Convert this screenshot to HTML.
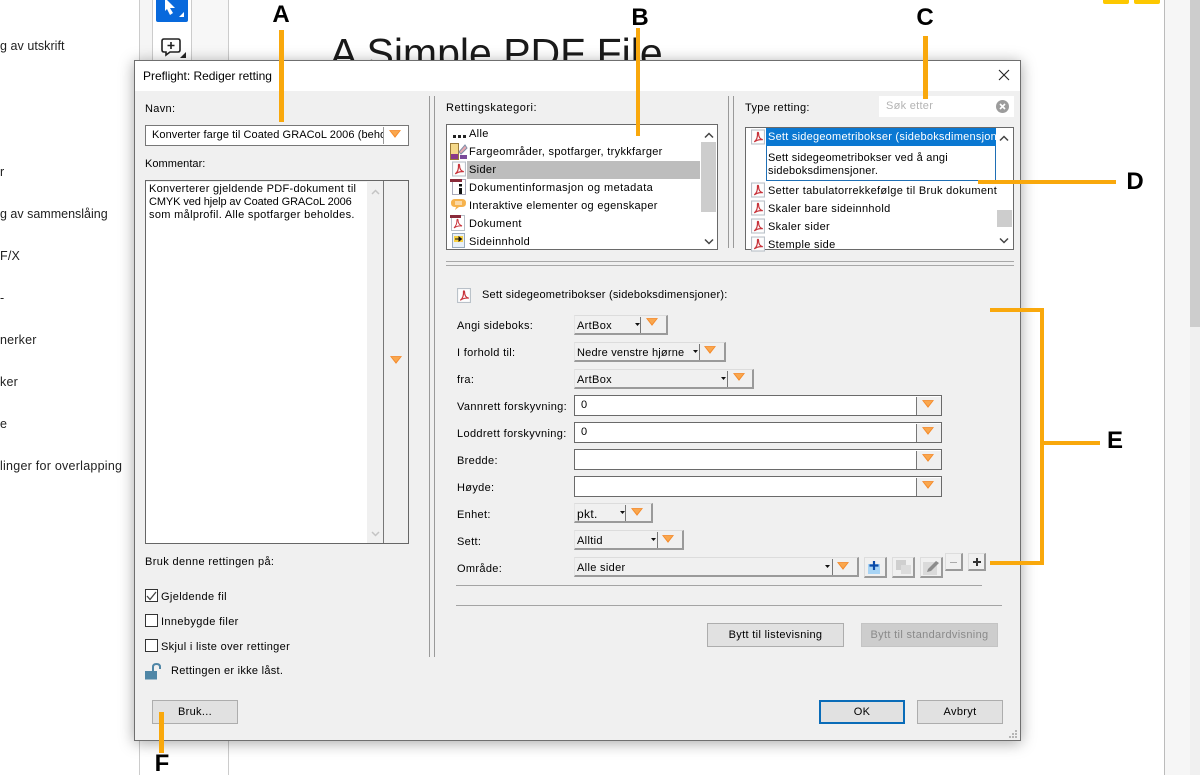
<!DOCTYPE html>
<html lang="no"><head><meta charset="utf-8"><title>Preflight: Rediger retting</title>
<style>
html,body{margin:0;padding:0}
body{position:relative;width:1200px;height:775px;overflow:hidden;background:#fff;font-family:"Liberation Sans",sans-serif;color:#111}
.a,.t,.o,.l,.sel,.inp,.btn,.tri,.pdf{position:absolute}
.t{white-space:pre;font-size:11px;line-height:14px;letter-spacing:.33px;color:#000;margin-top:1px}
.side{font-size:12.500px;letter-spacing:.2px;line-height:15px;color:#222}
.o{background:#f9a80c}
.l{font-weight:bold;font-size:24px;line-height:28px;color:#000;transform:translateX(-50%)}
.sel{height:20px;background:#f0f0f0;border-top:1px solid #dcdcdc;border-left:1px solid #e4e4e4;border-right:2px solid #9a9a9a;border-bottom:2px solid #9a9a9a;box-sizing:border-box}
.inp{height:21px;width:368px;left:574px;background:#fff;border:1px solid #6a6a6a;box-sizing:border-box}
.btn{box-sizing:border-box;background:#e1e1e1;border:1px solid #adadad;text-align:center;font-size:11px;letter-spacing:.33px;line-height:23px;color:#000}
svg{position:absolute;overflow:visible}
.s{position:absolute;background:#fff;overflow:hidden}
.chk{position:absolute;left:145px;width:11px;height:11px;border:1px solid #333;background:#fff}
.ico{box-sizing:border-box;position:absolute;width:23px;height:21px;background:#f0f0f0;border-right:2px solid #9a9a9a;border-bottom:2px solid #9a9a9a;border-top:1px solid #ddd;border-left:1px solid #ddd}
.g{position:absolute;left:341px;top:1px;width:24px;height:18px;background:#f0f0f0;border-left:1px solid #777}
</style></head><body>
<svg width="0" height="0" style="position:absolute"><defs>
<symbol id="p" viewBox="0 0 13 14"><rect x=".5" y=".5" width="12" height="13" fill="#fdfdfd" stroke="#b9c0c8"/><path d="M3 11.500C5 10 6.300 7 6 3.200C6 2.500 7 2.500 7 3.500C7 7 8.200 9 11 9.500C8 9.200 5 10 3 11.500Z" fill="none" stroke="#c8323a" stroke-width="1.100"/></symbol>
<symbol id="tr" viewBox="0 0 14 9"><path d="M0 0H14L7 9Z" fill="#f58a2a"/><path d="M2 1H12L7 7Z" fill="#f9a74e"/></symbol>
</defs></svg>

<!-- background application -->
<div class="a" style="left:139px;top:0;width:90px;height:775px;background:#fff;border-left:1px solid #ccc;border-right:1px solid #ccc;box-sizing:border-box"></div>
<div class="a" style="left:140px;top:0;width:12px;height:61px;background:#f5f5f5"></div>
<div class="a" style="left:152px;top:0;width:1px;height:61px;background:#ccc"></div>
<div class="a" style="left:191px;top:0;width:37px;height:61px;background:#f7f7f7;border-left:1px solid #ccc;box-sizing:border-box"></div>
<div class="a" style="left:156px;top:0;width:32px;height:22px;background:#0869dc;border-radius:0 0 2px 2px"></div>
<svg style="left:156px;top:0" width="32" height="22"><path d="M9 -2L19 8H14L17 13L14 15L11 9L9 11Z" fill="#fff"/><path d="M23 17L28 12V17Z" fill="#fff"/></svg>
<svg style="left:160px;top:36px" width="28" height="24"><path d="M4 3H18Q20 3 20 5V14Q20 16 18 16H10L6 19V16H4Q2 16 2 14V5Q2 3 4 3Z" fill="#fff" stroke="#222" stroke-width="1.600"/><path d="M11 6V13M7.500 9.500H14.500" stroke="#222" stroke-width="1.600"/><path d="M20 22L26 16V22Z" fill="#222"/></svg>
<div class="a" style="left:330px;top:31px;font-size:41px;line-height:44px;white-space:pre;color:#1a1a1a">A Simple PDF File</div>
<div class="a" style="left:1103px;top:0;width:26px;height:4px;background:#fdc800;border-radius:0 0 2px 2px"></div>
<div class="a" style="left:1134px;top:0;width:26px;height:4px;background:#fdc800;border-radius:0 0 2px 2px"></div>
<div class="a" style="left:1164px;top:0;width:26px;height:775px;background:#f6f6f6;border-left:1px solid #bbb;box-sizing:border-box"></div>
<div class="a" style="left:1190px;top:0;width:10px;height:327px;background:#cdcdcd"></div>
<div class="a" style="left:1190px;top:327px;width:10px;height:448px;background:#f0f0f0"></div>
<div class="t side" style="left:0;top:38px;letter-spacing:.05px">g av utskrift</div>
<div class="t side" style="left:0;top:164px">r</div>
<div class="t side" style="left:0;top:206px;letter-spacing:0">g av sammenslåing</div>
<div class="t side" style="left:0;top:248px">F/X</div>
<div class="t side" style="left:0;top:290px">-</div>
<div class="t side" style="left:0;top:332px">nerker</div>
<div class="t side" style="left:0;top:374px">ker</div>
<div class="t side" style="left:0;top:416px">e</div>
<div class="t side" style="left:0;top:458px;letter-spacing:.25px">linger for overlapping</div>

<!-- dialog -->
<div class="a" style="left:134px;top:60px;width:887px;height:681px;background:#f0f0f0;border:1px solid #6f6f6f;box-sizing:border-box;box-shadow:0 2px 14px rgba(0,0,0,.35)"></div>
<div class="a" style="left:135px;top:61px;width:885px;height:30px;background:#fff"></div>
<div class="t" style="left:143px;top:68px;font-size:12px;letter-spacing:-.02px">Preflight: Rediger retting</div>
<svg style="left:998px;top:69px" width="12" height="12"><path d="M1 1L11 11M11 1L1 11" stroke="#222" stroke-width="1.100"/></svg>

<!-- left column -->
<div class="t" style="left:145px;top:101px">Navn:</div>
<div class="a" style="left:145px;top:125px;width:264px;height:21px;background:#fff;border:1px solid #777;box-sizing:border-box"></div>
<div class="s" style="left:152px;top:127px;width:231px;height:17px;background:transparent"><div class="t" style="left:0;top:0;letter-spacing:.08px">Konverter farge til Coated GRACoL 2006 (behold)</div></div>
<div class="a" style="left:383px;top:127px;width:1px;height:17px;background:#999"></div>
<svg style="left:389px;top:130px" width="12" height="8"><use href="#tr"/></svg>
<div class="t" style="left:145px;top:156px;letter-spacing:.05px">Kommentar:</div>
<div class="a" style="left:145px;top:180px;width:264px;height:364px;background:#f0f0f0;border:1px solid #666;box-sizing:border-box"></div>
<div class="a" style="left:146px;top:182px;width:221px;height:361px;background:#fff"></div>
<div class="a" style="left:383px;top:181px;width:1px;height:362px;background:#777"></div>
<div class="t" style="left:149px;top:182px;line-height:13px;letter-spacing:.29px">Konverterer gjeldende PDF-dokument til</div>
<div class="t" style="left:149px;top:195px;line-height:13px;letter-spacing:-.1px">CMYK ved hjelp av Coated GRACoL 2006</div>
<div class="t" style="left:149px;top:208px;line-height:13px;letter-spacing:.33px">som målprofil. Alle spotfarger beholdes.</div>
<svg style="left:371px;top:189px" width="9" height="6"><path d="M1 5L4.500 1.500L8 5" fill="none" stroke="#c4c4c4" stroke-width="1.500"/></svg>
<svg style="left:371px;top:531px" width="9" height="6"><path d="M1 1L4.500 4.500L8 1" fill="none" stroke="#c4c4c4" stroke-width="1.500"/></svg>
<svg style="left:390px;top:356px" width="12" height="8"><use href="#tr"/></svg>
<div class="t" style="left:145px;top:554px;letter-spacing:.37px">Bruk denne rettingen på:</div>
<div class="chk" style="top:589px"></div>
<svg style="left:146px;top:591px" width="12" height="12"><path d="M1 5L4 8.500L10 1" fill="none" stroke="#444" stroke-width="1.300"/></svg>
<div class="t" style="left:161px;top:589px;letter-spacing:.37px">Gjeldende fil</div>
<div class="chk" style="top:614px"></div>
<div class="t" style="left:161px;top:614px;letter-spacing:.37px">Innebygde filer</div>
<div class="chk" style="top:639px"></div>
<div class="t" style="left:161px;top:639px">Skjul i liste over rettinger</div>
<svg style="left:145px;top:663px" width="18" height="17"><rect x="0" y="8" width="12" height="8.500" fill="#4f86a6"/><path d="M8 8V4Q8 1 11.500 1Q15 1 15 4V6" fill="none" stroke="#4f86a6" stroke-width="2"/></svg>
<div class="t" style="left:171px;top:663px;letter-spacing:.28px">Rettingen er ikke låst.</div>
<div class="btn" style="left:152px;top:700px;width:86px;height:24px">Bruk...</div>

<!-- separators -->
<div class="a" style="left:429px;top:96px;width:1px;height:561px;background:#9a9a9a"></div>
<div class="a" style="left:434px;top:96px;width:1px;height:561px;background:#9a9a9a"></div>
<div class="a" style="left:728px;top:96px;width:1px;height:152px;background:#9a9a9a"></div>
<div class="a" style="left:733px;top:96px;width:1px;height:152px;background:#9a9a9a"></div>
<div class="a" style="left:446px;top:261px;width:568px;height:1px;background:#a8a8a8"></div>
<div class="a" style="left:446px;top:265px;width:568px;height:1px;background:#a8a8a8"></div>

<!-- category list -->
<div class="t" style="left:446px;top:100px;letter-spacing:.5px">Rettingskategori:</div>
<div class="a" style="left:446px;top:124px;width:272px;height:126px;background:#fff;border:1px solid #6a6a6a;box-sizing:border-box"></div>
<div class="a" style="left:701px;top:142px;width:15px;height:70px;background:#cdcdcd"></div>
<svg style="left:704px;top:132px" width="10" height="7"><path d="M1 5.500L5 1.500L9 5.500" fill="none" stroke="#444" stroke-width="1.500"/></svg>
<svg style="left:704px;top:238px" width="10" height="7"><path d="M1 1.500L5 5.500L9 1.500" fill="none" stroke="#444" stroke-width="1.500"/></svg>
<div class="a" style="left:467px;top:161px;width:233px;height:18px;background:#bdbdbd"></div>
<svg style="left:453px;top:134px" width="13" height="4"><path d="M0 1H3V4H0ZM5 1H8V4H5ZM10 1H13V4H10Z" fill="#222"/></svg>
<div class="t" style="left:469px;top:126px">Alle</div>
<svg style="left:450px;top:143px" width="17" height="17"><rect x=".5" y=".5" width="8" height="16" fill="#f5d98a" stroke="#9a7a3a"/><rect x="1" y="11" width="7" height="5" fill="#8a3a8a"/><path d="M9 9L15 2L17 5L11 11Z" fill="#e8a8b0" stroke="#8090a8"/><rect x="10" y="12" width="7" height="4" fill="#7a4a9a"/></svg>
<div class="t" style="left:469px;top:144px;letter-spacing:.31px">Fargeområder, spotfarger, trykkfarger</div>
<svg style="left:452px;top:161px" width="14" height="16"><use href="#p"/></svg>
<div class="t" style="left:469px;top:162px">Sider</div>
<svg style="left:450px;top:179px" width="16" height="16"><rect x="2.500" y=".5" width="13" height="15" fill="#fff" stroke="#aab"/><path d="M0 0H12V3H0Z" fill="#8a2a3a"/><rect x="9" y="5" width="3" height="2.500" fill="#111"/><rect x="9" y="9" width="3" height="6" fill="#111"/></svg>
<div class="t" style="left:469px;top:180px;letter-spacing:.42px">Dokumentinformasjon og metadata</div>
<svg style="left:450px;top:198px" width="17" height="14"><path d="M5 1H12Q16 1 16 5Q16 9 12 9H9L5 12L6 9H5Q1 9 1 5Q1 1 5 1Z" fill="#f6b24c"/><path d="M5 4H12M5 6H12" stroke="#fff"/></svg>
<div class="t" style="left:469px;top:198px;letter-spacing:.29px">Interaktive elementer og egenskaper</div>
<svg style="left:450px;top:215px" width="16" height="16"><rect x="1.500" y=".5" width="13" height="15" fill="#fff" stroke="#b9c0c8"/><path d="M0 0H11V3H0Z" fill="#8a2a3a"/><path d="M4 13C6 11 7 8.500 7 5C7 4 8 4 8 5C8 8.500 9.500 10 12 11C9 10.500 6 11.500 4 13Z" fill="none" stroke="#c8323a"/></svg>
<div class="t" style="left:469px;top:216px">Dokument</div>
<svg style="left:452px;top:233px" width="14" height="16"><rect x=".5" y=".5" width="12" height="14" fill="#e8f0f8" stroke="#9ab"/><rect x="2" y="3" width="9" height="6" fill="#f8d040"/><path d="M3 6H8M7 4L9.500 6L7 8Z" stroke="#111" fill="#111"/></svg>
<div class="t" style="left:469px;top:234px">Sideinnhold</div>

<!-- type list -->
<div class="t" style="left:745px;top:100px">Type retting:</div>
<div class="a" style="left:879px;top:96px;width:135px;height:21px;background:#fff"></div>
<div class="t" style="left:886px;top:98px;color:#b4b4b4;letter-spacing:.28px">Søk etter</div>
<svg style="left:996px;top:100px" width="13" height="13"><circle cx="6.500" cy="6.500" r="6.500" fill="#9c9c9c"/><path d="M4 4L9 9M9 4L4 9" stroke="#fff" stroke-width="1.600"/></svg>
<div class="a" style="left:745px;top:127px;width:269px;height:123px;background:#fff;border:1px solid #6a6a6a;box-sizing:border-box"></div>
<div class="a" style="left:766px;top:128px;width:230px;height:53px;background:#fff;border:1px solid #1f6fb5;box-sizing:border-box"></div>
<div class="s" style="left:766px;top:128px;width:230px;height:18px;background:#0a78d2"><div class="t" style="left:2px;top:1px;color:#fff;letter-spacing:.24px">Sett sidegeometribokser (sideboksdimensjoner)</div></div>
<div class="t" style="left:768px;top:151px;line-height:13px;letter-spacing:.22px">Sett sidegeometribokser ved å angi
sideboksdimensjoner.</div>
<svg style="left:751px;top:129px" width="14" height="16"><use href="#p"/></svg>
<svg style="left:751px;top:182px" width="14" height="16"><use href="#p"/></svg>
<svg style="left:751px;top:200px" width="14" height="16"><use href="#p"/></svg>
<svg style="left:751px;top:218px" width="14" height="16"><use href="#p"/></svg>
<svg style="left:751px;top:236px" width="14" height="13" viewBox="0 0 14 13"><use href="#p" width="14" height="16"/></svg>
<div class="s" style="left:768px;top:183px;width:229px;height:16px;background:transparent"><div class="t" style="left:0;top:0">Setter tabulatorrekkefølge til Bruk dokumentstruktur</div></div>
<div class="t" style="left:768px;top:201px">Skaler bare sideinnhold</div>
<div class="t" style="left:768px;top:219px">Skaler sider</div>
<div class="s" style="left:768px;top:237px;width:200px;height:12px;background:transparent"><div class="t" style="left:0;top:0">Stemple side</div></div>
<div class="a" style="left:997px;top:210px;width:15px;height:17px;background:#cdcdcd"></div>
<svg style="left:999px;top:135px" width="10" height="7"><path d="M1 5.500L5 1.500L9 5.500" fill="none" stroke="#444" stroke-width="1.500"/></svg>
<svg style="left:999px;top:237px" width="10" height="7"><path d="M1 1.500L5 5.500L9 1.500" fill="none" stroke="#444" stroke-width="1.500"/></svg>

<!-- form -->
<svg style="left:457px;top:288px" width="14" height="15"><use href="#p"/></svg>
<div class="t" style="left:482px;top:287px;letter-spacing:.22px">Sett sidegeometribokser (sideboksdimensjoner):</div>
<div class="t" style="left:457px;top:318px">Angi sideboks:</div>
<div class="t" style="left:457px;top:345px">I forhold til:</div>
<div class="t" style="left:457px;top:372px">fra:</div>
<div class="t" style="left:457px;top:399px;letter-spacing:.36px">Vannrett forskyvning:</div>
<div class="t" style="left:457px;top:426px;letter-spacing:.36px">Loddrett forskyvning:</div>
<div class="t" style="left:457px;top:453px">Bredde:</div>
<div class="t" style="left:457px;top:480px">Høyde:</div>
<div class="t" style="left:457px;top:507px">Enhet:</div>
<div class="t" style="left:457px;top:534px">Sett:</div>
<div class="t" style="left:457px;top:561px">Område:</div>

<div class="sel" style="left:574px;top:315px;width:94px"></div>
<div class="t" style="left:577px;top:318px">ArtBox</div>
<svg style="left:635px;top:323px" width="5" height="3"><path d="M0 0H5L2.500 3Z" fill="#111"/></svg>
<div class="a" style="left:640px;top:317px;width:1px;height:16px;background:#777"></div>
<svg style="left:646px;top:318px" width="12" height="8"><use href="#tr"/></svg>

<div class="sel" style="left:574px;top:342px;width:152px"></div>
<div class="t" style="left:577px;top:345px;letter-spacing:.2px">Nedre venstre hjørne</div>
<svg style="left:693px;top:350px" width="5" height="3"><path d="M0 0H5L2.500 3Z" fill="#111"/></svg>
<div class="a" style="left:699px;top:344px;width:1px;height:16px;background:#777"></div>
<svg style="left:704px;top:346px" width="12" height="8"><use href="#tr"/></svg>

<div class="sel" style="left:574px;top:369px;width:180px"></div>
<div class="t" style="left:577px;top:372px">ArtBox</div>
<svg style="left:721px;top:377px" width="5" height="3"><path d="M0 0H5L2.500 3Z" fill="#111"/></svg>
<div class="a" style="left:727px;top:371px;width:1px;height:16px;background:#777"></div>
<svg style="left:733px;top:373px" width="12" height="8"><use href="#tr"/></svg>

<div class="inp" style="top:395px"><div class="g"></div></div>
<div class="t" style="left:581px;top:397px">0</div>
<svg style="left:922px;top:400px" width="12" height="8"><use href="#tr"/></svg>
<div class="inp" style="top:422px"><div class="g"></div></div>
<div class="t" style="left:581px;top:424px">0</div>
<svg style="left:922px;top:427px" width="12" height="8"><use href="#tr"/></svg>
<div class="inp" style="top:449px"><div class="g"></div></div>
<svg style="left:922px;top:454px" width="12" height="8"><use href="#tr"/></svg>
<div class="inp" style="top:476px"><div class="g"></div></div>
<svg style="left:922px;top:481px" width="12" height="8"><use href="#tr"/></svg>

<div class="sel" style="left:574px;top:503px;width:79px"></div>
<div class="t" style="left:577px;top:506px;font-size:12px">pkt.</div>
<svg style="left:620px;top:511px" width="5" height="3"><path d="M0 0H5L2.500 3Z" fill="#111"/></svg>
<div class="a" style="left:625px;top:505px;width:1px;height:16px;background:#777"></div>
<svg style="left:631px;top:508px" width="12" height="8"><use href="#tr"/></svg>

<div class="sel" style="left:574px;top:530px;width:110px"></div>
<div class="t" style="left:577px;top:533px">Alltid</div>
<svg style="left:651px;top:538px" width="5" height="3"><path d="M0 0H5L2.500 3Z" fill="#111"/></svg>
<div class="a" style="left:657px;top:532px;width:1px;height:16px;background:#777"></div>
<svg style="left:662px;top:535px" width="12" height="8"><use href="#tr"/></svg>

<div class="sel" style="left:574px;top:557px;width:285px"></div>
<div class="t" style="left:577px;top:560px">Alle sider</div>
<svg style="left:825px;top:565px" width="5" height="3"><path d="M0 0H5L2.500 3Z" fill="#111"/></svg>
<div class="a" style="left:832px;top:559px;width:1px;height:16px;background:#777"></div>
<svg style="left:837px;top:562px" width="12" height="8"><use href="#tr"/></svg>

<div class="ico" style="left:864px;top:557px"></div>
<svg style="left:864px;top:557px" width="23" height="21"><rect x="4" y="7" width="12" height="10" fill="#a8d4f5"/><path d="M10 4V13M5.500 8.500H14.500" stroke="#0a4aa8" stroke-width="2.200"/></svg>
<div class="ico" style="left:892px;top:557px"></div>
<svg style="left:892px;top:557px" width="23" height="21"><rect x="4" y="3" width="10" height="10" fill="#cfcfcf"/><rect x="9" y="8" width="10" height="9" fill="#dcdcdc"/></svg>
<div class="ico" style="left:920px;top:557px"></div>
<svg style="left:920px;top:557px" width="23" height="21"><rect x="3" y="5" width="14" height="13" fill="#dadada"/><path d="M7 15L8 12L16 4L19 6L11 14Z" fill="#8c8c8c"/></svg>
<div class="ico" style="left:945px;top:553px;width:18px;height:18px"></div>
<div class="a" style="left:950px;top:562px;width:7px;height:1px;background:#aaa"></div>
<div class="ico" style="left:968px;top:553px;width:18px;height:18px"></div>
<div class="a" style="left:973px;top:561px;width:8px;height:2px;background:#333"></div>
<div class="a" style="left:976px;top:558px;width:2px;height:8px;background:#333"></div>

<div class="a" style="left:456px;top:585px;width:526px;height:1px;background:#a4a4a4"></div>
<div class="a" style="left:456px;top:605px;width:546px;height:1px;background:#a4a4a4"></div>
<div class="btn" style="left:707px;top:623px;width:137px;height:24px">Bytt til listevisning</div>
<div class="btn" style="left:861px;top:623px;width:137px;height:24px;background:#cdcdcd;border-color:#c4c4c4;color:#8a8a8a">Bytt til standardvisning</div>
<div class="btn" style="left:819px;top:700px;width:86px;height:24px;border:2px solid #0a6cb8;line-height:21px">OK</div>
<div class="btn" style="left:917px;top:700px;width:86px;height:24px">Avbryt</div>
<svg style="left:1008px;top:729px" width="10" height="10"><path d="M7 1H9V3H7ZM4 4H6V6H4ZM7 4H9V6H7ZM1 7H3V9H1ZM4 7H6V9H4ZM7 7H9V9H7Z" fill="#b5b5b5"/></svg>

<!-- callouts -->
<div class="o" style="left:279px;top:30px;width:5px;height:92px"></div>
<div class="l" style="left:281px;top:1px">A</div>
<div class="o" style="left:636px;top:28px;width:4px;height:108px"></div>
<div class="l" style="left:640px;top:4px">B</div>
<div class="o" style="left:923px;top:36px;width:5px;height:63px"></div>
<div class="l" style="left:925px;top:4px">C</div>
<div class="o" style="left:978px;top:180px;width:138px;height:4px"></div>
<div class="l" style="left:1135px;top:168px">D</div>
<div class="o" style="left:990px;top:308px;width:54px;height:4px"></div>
<div class="o" style="left:1040px;top:308px;width:4px;height:257px"></div>
<div class="o" style="left:990px;top:561px;width:54px;height:4px"></div>
<div class="o" style="left:1044px;top:441px;width:56px;height:4px"></div>
<div class="l" style="left:1115px;top:427px">E</div>
<div class="o" style="left:159px;top:712px;width:5px;height:41px"></div>
<div class="l" style="left:162px;top:750px">F</div>
</body></html>
